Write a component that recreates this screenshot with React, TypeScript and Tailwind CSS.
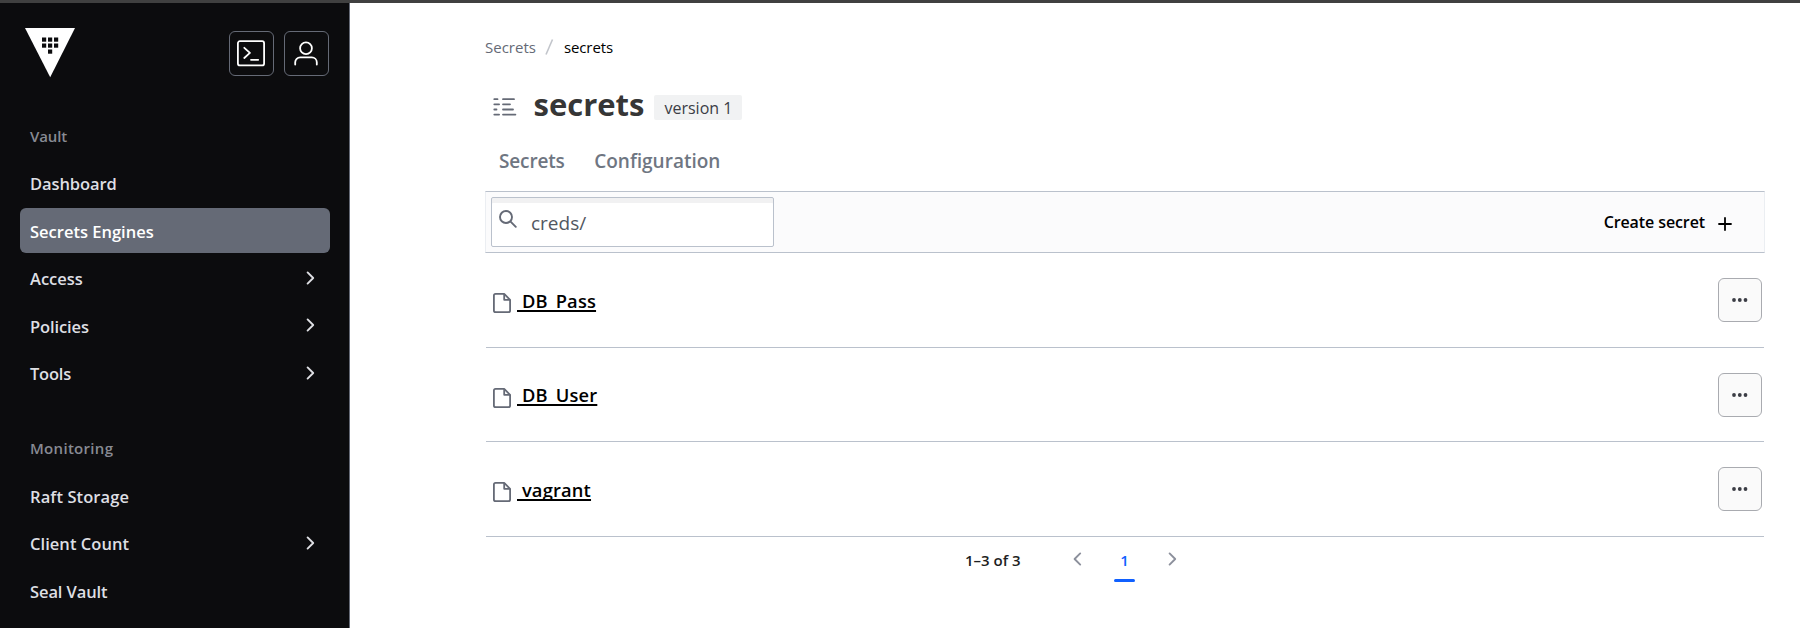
type NavItem = { label: string; active?: boolean; nested?: boolean; tracking?: string };

const vaultItems: NavItem[] = [
  { label: "Dashboard", tracking: "tracking-[-0.1px]" },
  { label: "Secrets Engines", active: true },
  { label: "Access", nested: true },
  { label: "Policies", nested: true, tracking: "tracking-[-0.1px]" },
  { label: "Tools", nested: true, tracking: "tracking-[-0.2px]" },
];

const monitoringItems: NavItem[] = [
  { label: "Raft Storage", tracking: "tracking-[0.1px]" },
  { label: "Client Count", nested: true, tracking: "tracking-[0.05px]" },
  { label: "Seal Vault", tracking: "tracking-[-0.1px]" },
];

const secrets = ["DB_Pass", "DB_User", "vagrant"];

function Chevron({ className, flip }: { className: string; flip?: boolean }) {
  return (
    <svg width="9" height="14" viewBox="0 0 9 14" fill="none" className={className}>
      <path
        d={flip ? "M7.2 1.4 1.6 7l5.6 5.6" : "M1.6 1.4 7.2 7l-5.6 5.6"}
        stroke="currentColor"
        strokeWidth="1.9"
        strokeLinecap="round"
        strokeLinejoin="round"
      />
    </svg>
  );
}

function VaultLogo() {
  const dots = [
    [17, 9.5], [23, 9.5], [29, 9.5],
    [17, 15.5], [23, 15.5], [29, 15.5],
    [23, 21.5],
  ];
  return (
    <svg width="50" height="50" viewBox="0 0 50 50" className="mt-[-3px]">
      <path d="M0 0h50L25.2 49.2z" fill="#fff" />
      {dots.map(([x, y]) => (
        <rect key={`${x}-${y}`} x={x} y={y} width="4.2" height="4.2" fill="#0c0c0e" />
      ))}
    </svg>
  );
}

function NavRow({ item }: { item: NavItem }) {
  return (
    <a
      className={
        "flex h-[45px] shrink-0 items-center justify-between rounded-md pr-[15.5px] pl-[10px] " +
        (item.active ? "bg-[#656a76] text-white" : "text-[#dedfe3]")
      }
    >
      <span className={"pt-[4px] text-[16.5px] font-semibold " + (item.tracking ?? "")}>{item.label}</span>
      {item.nested && <Chevron className="text-[#dedfe3]" />}
    </a>
  );
}

function NavSection({ title, items, className }: { title: string; items: NavItem[]; className: string }) {
  return (
    <section className={className}>
      <h2 className="flex h-12 items-center pl-2.5 text-[15px] font-semibold text-[#878a93]">
        <span className={title === "Vault" ? "tracking-[-0.1px]" : "tracking-[0.3px]"}>{title}</span>
      </h2>
      <div className="flex flex-col gap-[2.5px]">
        {items.map((item) => (
          <NavRow key={item.label} item={item} />
        ))}
      </div>
    </section>
  );
}

function Sidebar() {
  return (
    <aside className="flex w-[350px] shrink-0 flex-col overflow-hidden border-r border-[#656a76] bg-[#0c0c0e] pt-7 pr-[19px] pl-5">
      <div className="flex h-[45px] items-start justify-between pr-px pl-[5px]">
        <VaultLogo />
        <div className="flex gap-2.5">
          <button className="flex size-[45px] items-center justify-center rounded-md border border-[#656a76] pr-px">
            <svg width="28" height="27" viewBox="0 0 28 27" fill="none" stroke="#fff" strokeWidth="1.8" strokeLinecap="round" strokeLinejoin="round">
              <rect x="0.9" y="1.2" width="26.2" height="24.2" rx="2" />
              <path d="m7.3 7.8 5.6 5.1-5.6 5.1M14 19.8h7.2" />
            </svg>
          </button>
          <button className="flex size-[45px] items-center justify-center rounded-md border border-[#656a76] pr-px">
            <svg width="24" height="25" viewBox="0 0 24 25" fill="none" stroke="#fff" strokeWidth="1.8" strokeLinecap="round">
              <circle cx="12" cy="7.3" r="5.9" />
              <path d="M1.2 23.5v-2.2a5 5 0 0 1 5-5h11.6a5 5 0 0 1 5 5v2.2" />
            </svg>
          </button>
        </div>
      </div>
      <NavSection title="Vault" items={vaultItems} className="mt-[36px]" />
      <NavSection title="Monitoring" items={monitoringItems} className="mt-[29.5px]" />
    </aside>
  );
}

function Header() {
  return (
    <header className="flex flex-col">
      <nav className="flex h-6 items-center text-[15px] leading-6">
        <a className="text-[#656a76]">Secrets</a>
        <svg width="9" height="16" viewBox="0 0 9 16" className="mx-[9.5px]">
          <path d="M1 15.5 7.5.5" stroke="#c2c5cb" strokeWidth="1.6" />
        </svg>
        <span className="tracking-[-0.1px] text-black">secrets</span>
      </nav>
      <div className="mt-[21px] flex h-12 items-center pl-2">
        <svg width="24" height="18" viewBox="0 0 24 18" fill="none" stroke="#656a76" strokeWidth="1.8" strokeLinecap="round" className="mt-[5px]">
          <path d="M1.3 1.2h3.2M10 1.2h11M1.3 6.3h4.8M10 6.3h7M1.3 11.5h2.2M10 11.5h10M1.3 16.6h4.8M10 16.6h12.4" />
        </svg>
        <h1 className="ml-[16.5px] text-[31px] leading-[48px] font-bold text-[#363636]">secrets</h1>
        <span className="mt-[6px] ml-2.5 flex h-[25px] w-[88px] items-center justify-center rounded-xs bg-[#f1f2f3] pt-px text-[16px] text-[#3b3d45]">
          version 1
        </span>
      </div>
      <div className="mt-1.5 flex h-[57px] gap-[29.5px] pl-[14px] text-[19px] leading-[55px] font-semibold text-[#6f7682]">
        <a className="tracking-[-0.15px]">Secrets</a>
        <a>Configuration</a>
      </div>
    </header>
  );
}

function Toolbar() {
  return (
    <div className="flex h-[62px] items-center justify-between border-x border-y border-x-[#ebeef2] border-y-[#bac1cc] bg-[#fbfbfc] pr-8 pl-[5px]">
      <label className="flex h-[50px] w-[283px] items-center rounded-xs border border-[#bac1cc] bg-white pl-[7px] shadow-[inset_0_5px_0_#f1f1f2]">
        <svg width="18" height="18" viewBox="0 0 18 18" fill="none" stroke="#656a76" strokeWidth="1.9" strokeLinecap="round" className="mb-[6px]">
          <circle cx="7" cy="7" r="6" />
          <path d="m11.6 11.6 5.2 5.2" />
        </svg>
        <span className="ml-[14px] pt-[2px] text-[19px] text-[#525761]">creds/</span>
      </label>
      <button className="flex items-center text-[16px] font-semibold text-black">
        <span className="tracking-[-0.1px]">Create secret</span>
        <svg width="14" height="14" viewBox="0 0 14 14" fill="none" stroke="#000" strokeWidth="1.8" strokeLinecap="round" className="mt-[3px] ml-[13px]">
          <path d="M7 1v12M1 7h12" />
        </svg>
      </button>
    </div>
  );
}

function SecretRow({ name }: { name: string }) {
  return (
    <li className="mx-px flex h-[94.7px] items-center justify-between border-b border-[#bac1cc] pr-0.5 pl-[7px]">
      <a className="flex items-center">
        <svg width="18" height="20" viewBox="0 0 18 20" fill="none" stroke="#656a76" strokeWidth="1.8" strokeLinejoin="round" className="mt-[6px]">
          <path d="M2.6.9h8.6l5.9 5.9v10.6a1.7 1.7 0 0 1-1.7 1.7H2.6a1.7 1.7 0 0 1-1.7-1.7V2.6A1.7 1.7 0 0 1 2.6.9z" />
          <path d="M11.2.9v5.9h5.9" />
        </svg>
        <span className="mt-px ml-[6px] text-[18.3px] font-semibold tracking-[0.18px] whitespace-pre text-black underline decoration-2 underline-offset-2 [text-decoration-skip-ink:none]">
          {" " + name}
        </span>
      </a>
      <button className="flex size-11 items-center justify-center rounded-md border border-[#a9abb0] bg-[#fafafa]">
        <svg width="16" height="4" viewBox="0 0 16 4" fill="#3b3d45">
          <circle cx="2" cy="2" r="1.9" />
          <circle cx="7.8" cy="2" r="1.9" />
          <circle cx="13.5" cy="2" r="1.9" />
        </svg>
      </button>
    </li>
  );
}

function Pagination() {
  return (
    <div className="flex h-[46px] items-start pl-[480px] text-[15px] leading-[46px] font-semibold">
      <span className="w-[107.5px] text-[#1d1e22]">1–3 of 3</span>
      <Chevron flip className="mt-[15px] text-[#8c909c]" />
      <span className="ml-[32.5px] flex h-[46px] w-[21px] flex-col items-center text-[#1060ff]">
        <span className="h-[42px]">1</span>
        <span className="h-[3px] w-full rounded-full bg-[#1060ff]" />
      </span>
      <Chevron className="mt-[15px] ml-[32.5px] text-[#8c909c]" />
    </div>
  );
}

export default function App() {
  return (
    <div className="flex h-[628px] w-[1800px] flex-col overflow-hidden bg-white font-['Open_Sans','Noto_Sans',sans-serif]">
      <div className="h-[3px] shrink-0 bg-[#404040]" />
      <div className="flex min-h-0 flex-1">
        <Sidebar />
        <main className="ml-[135px] w-[1280px] pt-8">
          <Header />
          <Toolbar />
          <ul>
            {secrets.map((name) => (
              <SecretRow key={name} name={name} />
            ))}
          </ul>
          <Pagination />
        </main>
      </div>
    </div>
  );
}
